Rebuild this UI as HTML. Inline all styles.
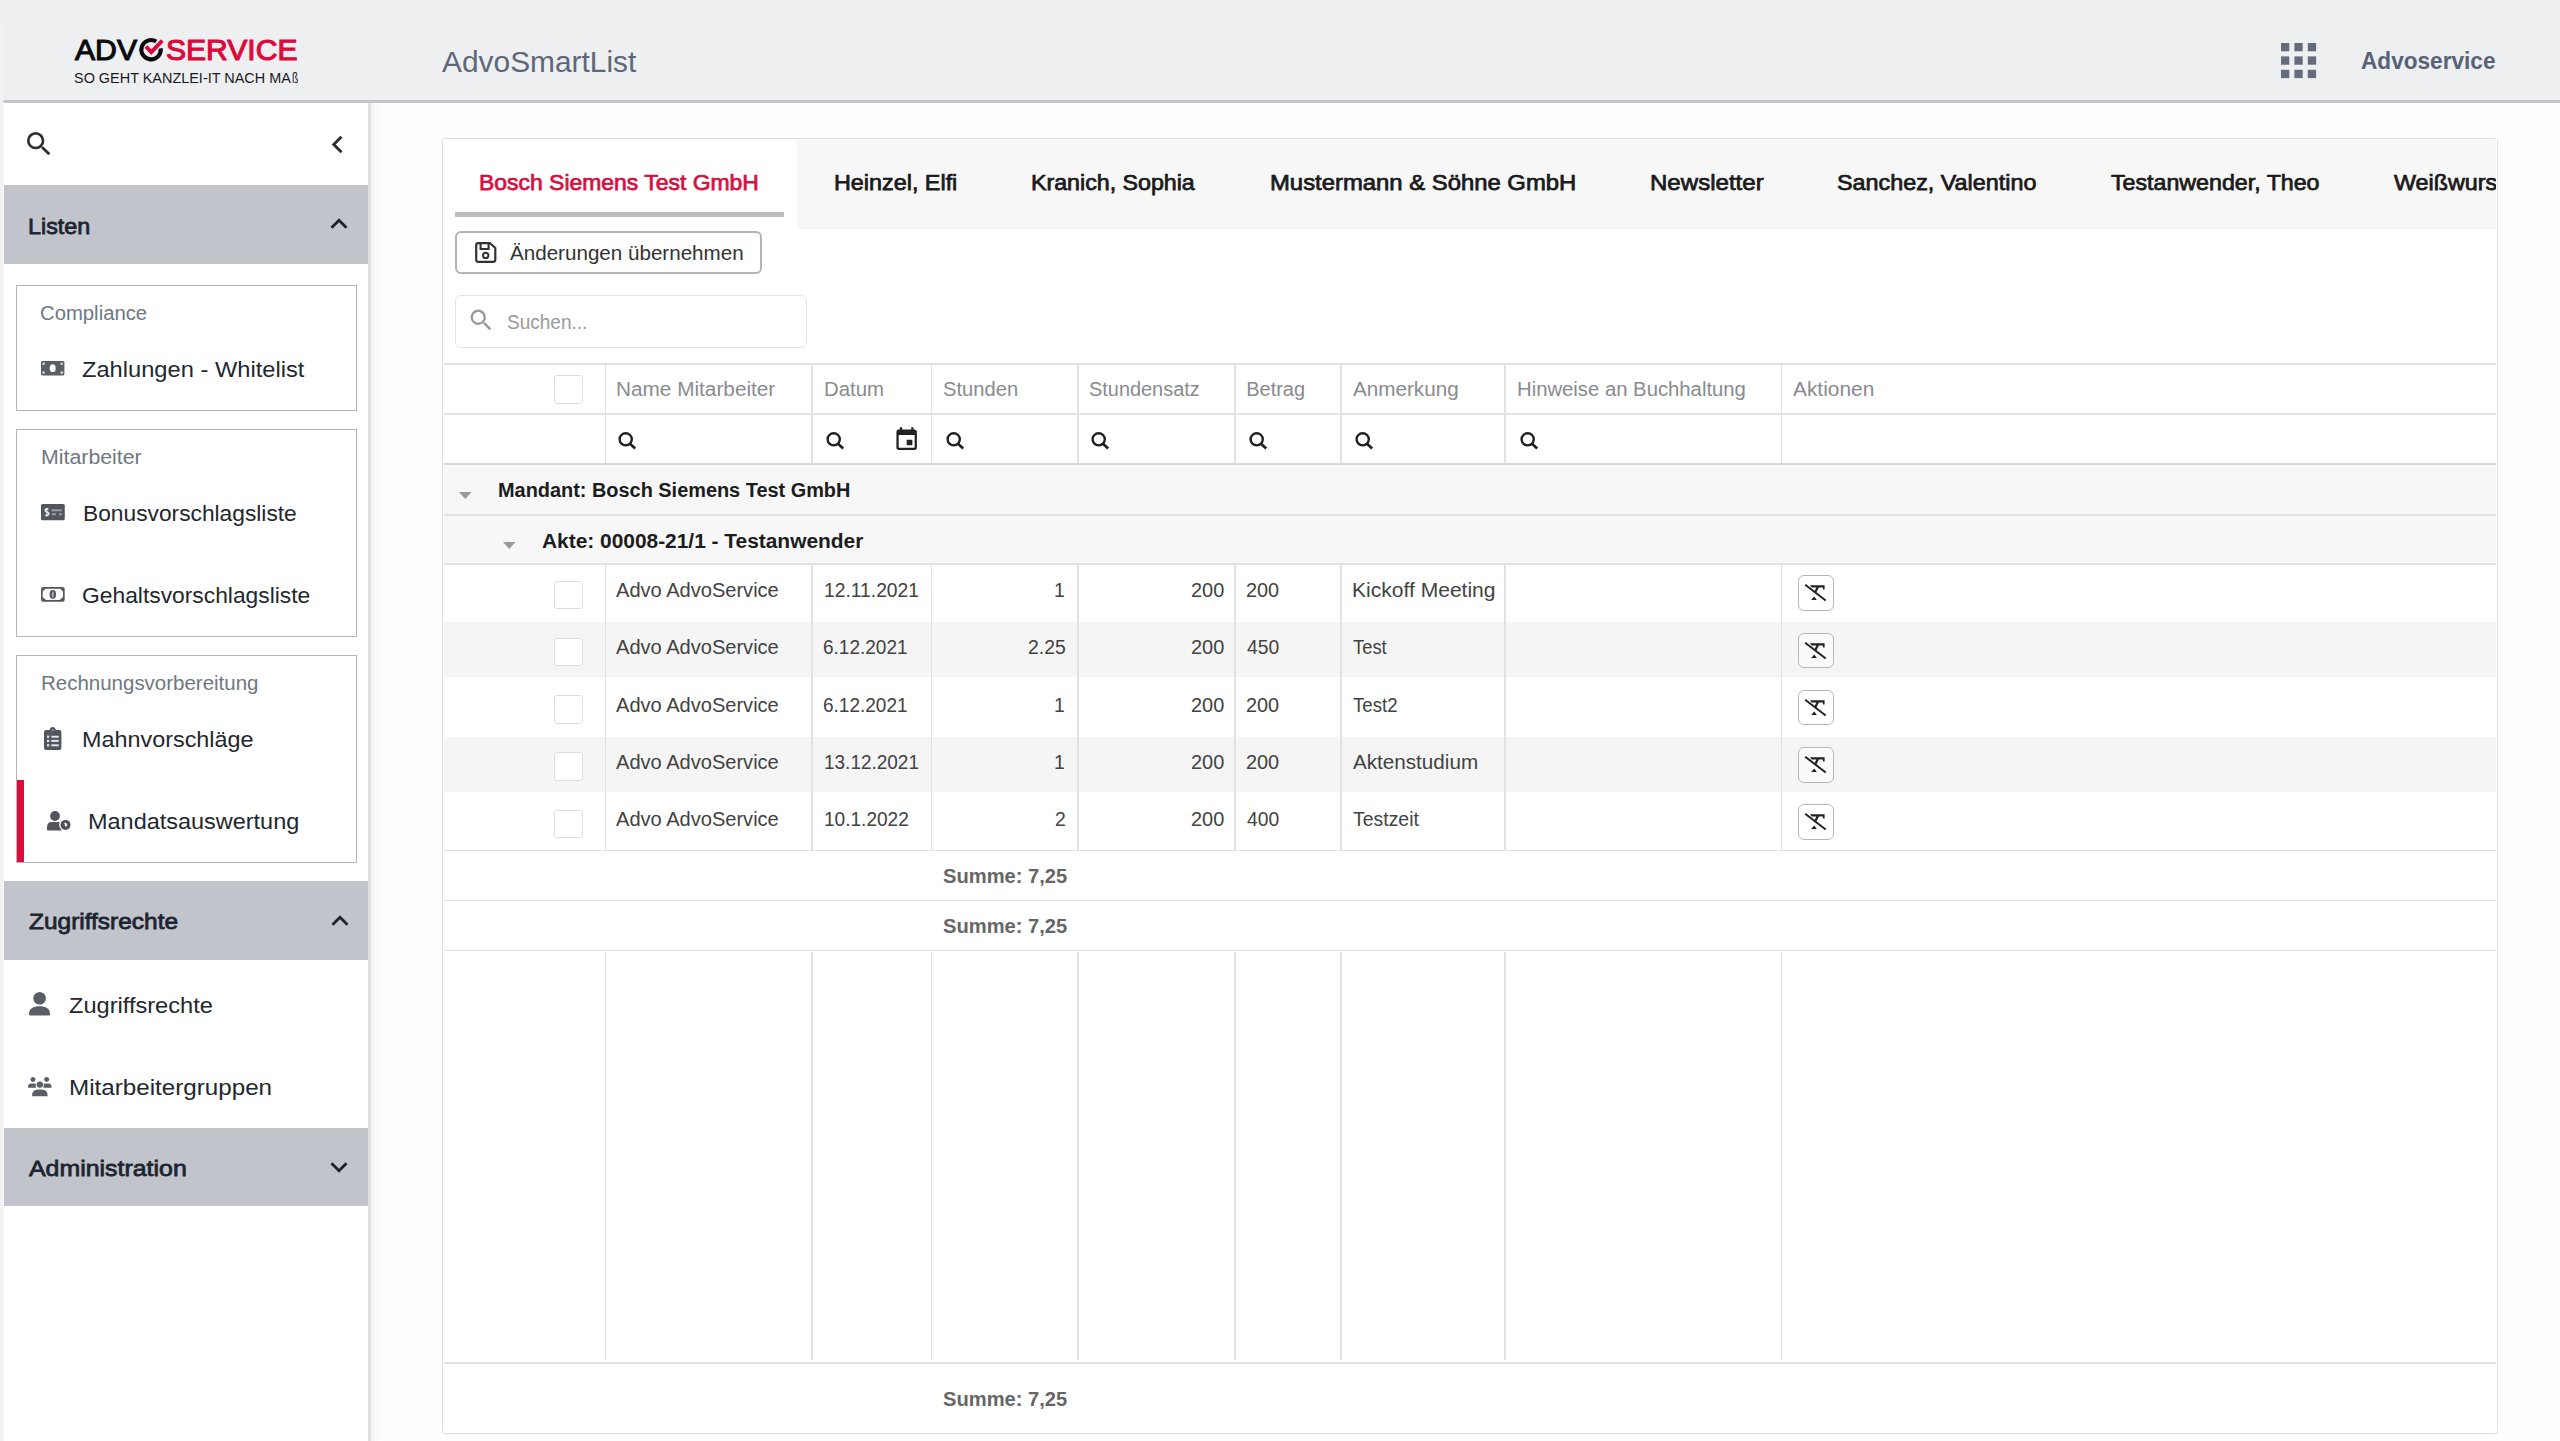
<!DOCTYPE html>
<html lang="de"><head><meta charset="utf-8"><title>AdvoSmartList</title>
<style>
html,body{margin:0;padding:0;overflow:hidden;}
body{width:2560px;height:1441px;overflow:hidden;position:relative;background:#fefefe;font-family:"Liberation Sans", sans-serif;}
.t{position:absolute;white-space:nowrap;line-height:1;transform-origin:0 0;font-family:"Liberation Sans", sans-serif;}
.b{position:absolute;box-sizing:border-box;}
svg{position:absolute;overflow:visible;}
</style></head><body>
<div class="b" style="left:4px;top:102px;width:364px;height:1339px;background:#ffffff;"></div>
<div class="b" style="left:368.2px;top:102.8px;width:12px;height:1338.2px;background:linear-gradient(to right,#e0e0e3 0,#e0e0e3 19%,#f5f5f6 26%,#fdfdfd 100%);"></div>
<div class="b" style="left:0px;top:0px;width:2560px;height:100px;background:#eeeff1;"></div>
<div class="b" style="left:0px;top:100px;width:2560px;height:2.8px;background:#c3c4c7;"></div>
<div class="b" style="left:0px;top:24px;width:4.2px;height:1417px;background:linear-gradient(to right,#f3f3f4 0,#f2f2f3 70%,rgba(242,242,243,0) 100%);"></div>
<div class="b" style="left:4px;top:185px;width:364px;height:79px;background:#c1c4cb;"></div>
<div class="b" style="left:4px;top:881px;width:364px;height:79px;background:#c1c4cb;"></div>
<div class="b" style="left:4px;top:1127.5px;width:364px;height:78.5px;background:#c1c4cb;"></div>
<div class="b" style="left:16px;top:285px;width:341px;height:126px;background:#fff;border:1.7px solid #b3b5b9;"></div>
<div class="b" style="left:16px;top:429px;width:341px;height:208px;background:#fff;border:1.7px solid #b3b5b9;"></div>
<div class="b" style="left:16px;top:655px;width:341px;height:208px;background:#fff;border:1.7px solid #b3b5b9;"></div>
<div class="b" style="left:17px;top:780px;width:6.5px;height:82px;background:#de0b3d;"></div>
<div class="b" style="left:442px;top:138px;width:2055.5px;height:1296px;background:#ffffff;border:1.8px solid #dedede;border-radius:2.5px;"></div>
<div class="b" style="left:444px;top:140px;width:2052px;height:89px;background:#f7f7f7;"></div>
<div class="b" style="left:444px;top:140px;width:353px;height:90px;background:#ffffff;"></div>
<div class="b" style="left:455px;top:211.5px;width:329px;height:5.5px;background:#bcbec2;"></div>
<div class="b" style="left:455px;top:231px;width:307px;height:43px;background:#fff;border:2px solid #b3b3b3;border-radius:6px;"></div>
<div class="b" style="left:455px;top:295px;width:352px;height:53px;background:#fff;border:1.7px solid #e2e2e2;border-radius:6px;"></div>
<div class="b" style="left:444px;top:465px;width:2052px;height:49px;background:#f7f7f7;"></div>
<div class="b" style="left:444px;top:516px;width:2052px;height:48px;background:#f7f7f7;"></div>
<div class="b" style="left:444px;top:622.2px;width:2052px;height:55px;background:#f5f5f5;"></div>
<div class="b" style="left:444px;top:736.9px;width:2052px;height:55px;background:#f5f5f5;"></div>
<div class="b" style="left:444px;top:363px;width:2052px;height:1.6px;background:#e2e2e2;"></div>
<div class="b" style="left:444px;top:413px;width:2052px;height:1.5px;background:#e2e2e2;"></div>
<div class="b" style="left:444px;top:463px;width:2052px;height:2.2px;background:#d9d9d9;"></div>
<div class="b" style="left:444px;top:514px;width:2052px;height:1.6px;background:#e2e2e2;"></div>
<div class="b" style="left:444px;top:563.4px;width:2052px;height:1.5px;background:#e2e2e2;"></div>
<div class="b" style="left:444px;top:849.7px;width:2052px;height:1.5px;background:#e2e2e2;"></div>
<div class="b" style="left:444px;top:899.6px;width:2052px;height:1.5px;background:#e2e2e2;"></div>
<div class="b" style="left:444px;top:949.6px;width:2052px;height:1.5px;background:#e2e2e2;"></div>
<div class="b" style="left:444px;top:1361.5px;width:2052px;height:2px;background:#e2e2e2;"></div>
<div class="b" style="left:604.5px;top:365px;width:1.5px;height:98px;background:#e2e2e2;"></div>
<div class="b" style="left:604.5px;top:565px;width:1.5px;height:285.5px;background:#e2e2e2;"></div>
<div class="b" style="left:604.5px;top:951.5px;width:1.5px;height:408px;background:#e2e2e2;"></div>
<div class="b" style="left:811.25px;top:365px;width:1.5px;height:98px;background:#e2e2e2;"></div>
<div class="b" style="left:811.25px;top:565px;width:1.5px;height:285.5px;background:#e2e2e2;"></div>
<div class="b" style="left:811.25px;top:951.5px;width:1.5px;height:408px;background:#e2e2e2;"></div>
<div class="b" style="left:930.5px;top:365px;width:1.5px;height:98px;background:#e2e2e2;"></div>
<div class="b" style="left:930.5px;top:565px;width:1.5px;height:285.5px;background:#e2e2e2;"></div>
<div class="b" style="left:930.5px;top:951.5px;width:1.5px;height:408px;background:#e2e2e2;"></div>
<div class="b" style="left:1077.25px;top:365px;width:1.5px;height:98px;background:#e2e2e2;"></div>
<div class="b" style="left:1077.25px;top:565px;width:1.5px;height:285.5px;background:#e2e2e2;"></div>
<div class="b" style="left:1077.25px;top:951.5px;width:1.5px;height:408px;background:#e2e2e2;"></div>
<div class="b" style="left:1234.25px;top:365px;width:1.5px;height:98px;background:#e2e2e2;"></div>
<div class="b" style="left:1234.25px;top:565px;width:1.5px;height:285.5px;background:#e2e2e2;"></div>
<div class="b" style="left:1234.25px;top:951.5px;width:1.5px;height:408px;background:#e2e2e2;"></div>
<div class="b" style="left:1340.25px;top:365px;width:1.5px;height:98px;background:#e2e2e2;"></div>
<div class="b" style="left:1340.25px;top:565px;width:1.5px;height:285.5px;background:#e2e2e2;"></div>
<div class="b" style="left:1340.25px;top:951.5px;width:1.5px;height:408px;background:#e2e2e2;"></div>
<div class="b" style="left:1504.25px;top:365px;width:1.5px;height:98px;background:#e2e2e2;"></div>
<div class="b" style="left:1504.25px;top:565px;width:1.5px;height:285.5px;background:#e2e2e2;"></div>
<div class="b" style="left:1504.25px;top:951.5px;width:1.5px;height:408px;background:#e2e2e2;"></div>
<div class="b" style="left:1780.5px;top:365px;width:1.5px;height:98px;background:#e2e2e2;"></div>
<div class="b" style="left:1780.5px;top:565px;width:1.5px;height:285.5px;background:#e2e2e2;"></div>
<div class="b" style="left:1780.5px;top:951.5px;width:1.5px;height:408px;background:#e2e2e2;"></div>
<div class="b" style="left:554px;top:375px;width:29px;height:28.5px;background:#fff;border:1.5px solid #dedede;border-radius:3px;"></div>
<div class="b" style="left:553.5px;top:580.5px;width:29px;height:28.5px;background:#fff;border:1.5px solid #dedede;border-radius:3px;"></div>
<div class="b" style="left:1798.3px;top:575.4px;width:35.3px;height:35.3px;background:rgba(255,255,255,0.5);border:1.8px solid #b7b7b7;border-radius:6px;"></div>
<svg style="left:1798.3px;top:575.4px;" width="35.3" height="35.3" viewBox="0 0 35.3 35.3"><path d="M7.2 9.7 L27.7 25.5" stroke="#222" stroke-width="2" fill="none"/><path d="M12 10.3 H26.6 V14.4 H24.9 V12.4 H20.9 L17.9 18.6 L15.9 17.2 L18.4 12.4 H13.6 Z" fill="#222"/><path d="M13.1 25.1 L16.3 21.4 L18.8 25.1 Z" fill="#222"/></svg>
<div class="b" style="left:553.5px;top:637.75px;width:29px;height:28.5px;background:#fff;border:1.5px solid #dedede;border-radius:3px;"></div>
<div class="b" style="left:1798.3px;top:632.67px;width:35.3px;height:35.3px;background:rgba(255,255,255,0.5);border:1.8px solid #b7b7b7;border-radius:6px;"></div>
<svg style="left:1798.3px;top:632.67px;" width="35.3" height="35.3" viewBox="0 0 35.3 35.3"><path d="M7.2 9.7 L27.7 25.5" stroke="#222" stroke-width="2" fill="none"/><path d="M12 10.3 H26.6 V14.4 H24.9 V12.4 H20.9 L17.9 18.6 L15.9 17.2 L18.4 12.4 H13.6 Z" fill="#222"/><path d="M13.1 25.1 L16.3 21.4 L18.8 25.1 Z" fill="#222"/></svg>
<div class="b" style="left:553.5px;top:695.0px;width:29px;height:28.5px;background:#fff;border:1.5px solid #dedede;border-radius:3px;"></div>
<div class="b" style="left:1798.3px;top:689.9399999999999px;width:35.3px;height:35.3px;background:rgba(255,255,255,0.5);border:1.8px solid #b7b7b7;border-radius:6px;"></div>
<svg style="left:1798.3px;top:689.9399999999999px;" width="35.3" height="35.3" viewBox="0 0 35.3 35.3"><path d="M7.2 9.7 L27.7 25.5" stroke="#222" stroke-width="2" fill="none"/><path d="M12 10.3 H26.6 V14.4 H24.9 V12.4 H20.9 L17.9 18.6 L15.9 17.2 L18.4 12.4 H13.6 Z" fill="#222"/><path d="M13.1 25.1 L16.3 21.4 L18.8 25.1 Z" fill="#222"/></svg>
<div class="b" style="left:553.5px;top:752.25px;width:29px;height:28.5px;background:#fff;border:1.5px solid #dedede;border-radius:3px;"></div>
<div class="b" style="left:1798.3px;top:747.21px;width:35.3px;height:35.3px;background:rgba(255,255,255,0.5);border:1.8px solid #b7b7b7;border-radius:6px;"></div>
<svg style="left:1798.3px;top:747.21px;" width="35.3" height="35.3" viewBox="0 0 35.3 35.3"><path d="M7.2 9.7 L27.7 25.5" stroke="#222" stroke-width="2" fill="none"/><path d="M12 10.3 H26.6 V14.4 H24.9 V12.4 H20.9 L17.9 18.6 L15.9 17.2 L18.4 12.4 H13.6 Z" fill="#222"/><path d="M13.1 25.1 L16.3 21.4 L18.8 25.1 Z" fill="#222"/></svg>
<div class="b" style="left:553.5px;top:809.5px;width:29px;height:28.5px;background:#fff;border:1.5px solid #dedede;border-radius:3px;"></div>
<div class="b" style="left:1798.3px;top:804.48px;width:35.3px;height:35.3px;background:rgba(255,255,255,0.5);border:1.8px solid #b7b7b7;border-radius:6px;"></div>
<svg style="left:1798.3px;top:804.48px;" width="35.3" height="35.3" viewBox="0 0 35.3 35.3"><path d="M7.2 9.7 L27.7 25.5" stroke="#222" stroke-width="2" fill="none"/><path d="M12 10.3 H26.6 V14.4 H24.9 V12.4 H20.9 L17.9 18.6 L15.9 17.2 L18.4 12.4 H13.6 Z" fill="#222"/><path d="M13.1 25.1 L16.3 21.4 L18.8 25.1 Z" fill="#222"/></svg>
<svg style="left:459px;top:491.5px;" width="12.5" height="7" viewBox="0 0 12.5 7"><path d="M0 0H12.5L6.25 7Z" fill="#9a9a9a"/></svg>
<svg style="left:503px;top:541.5px;" width="12.5" height="7" viewBox="0 0 12.5 7"><path d="M0 0H12.5L6.25 7Z" fill="#9a9a9a"/></svg>
<svg style="left:23.40343053173242px;top:128.30343053173243px;" width="31.972555746140657" height="31.972555746140657" viewBox="0 0 24 24"><path d="M15.5 14h-.79l-.28-.27A6.471 6.471 0 0 0 16 9.5 6.5 6.5 0 1 0 9.5 16c1.61 0 3.09-.59 4.23-1.57l.27.28v.79l5 4.99L20.49 19l-4.99-5zm-6 0C7.01 14 5 11.99 5 9.5S7.01 5 9.5 5 14 7.01 14 9.5 11.99 14 9.5 14z" fill="#2b2f36"/></svg>
<svg style="left:320.3px;top:126.8px;" width="35" height="35" viewBox="0 0 24 24"><path d="M15.41 7.41L14 6l-6 6 6 6 1.41-1.41L10.83 12z" fill="#2b2f36"/></svg>
<svg style="left:322px;top:207px;" width="34" height="34" viewBox="0 0 24 24"><path d="M12 8l-6 6 1.41 1.41L12 10.83l4.59 4.58L18 14z" fill="#1e2430"/></svg>
<svg style="left:322.5px;top:904.4px;" width="34" height="34" viewBox="0 0 24 24"><path d="M12 8l-6 6 1.41 1.41L12 10.83l4.59 4.58L18 14z" fill="#1e2430"/></svg>
<svg style="left:322px;top:1149.8px;" width="34" height="34" viewBox="0 0 24 24"><path d="M16.59 8.59L12 13.17 7.41 8.59 6 10l6 6 6-6z" fill="#1e2430"/></svg>
<svg style="left:467.4493996569468px;top:306.4493996569468px;" width="28.404802744425385" height="28.404802744425385" viewBox="0 0 24 24"><path d="M15.5 14h-.79l-.28-.27A6.471 6.471 0 0 0 16 9.5 6.5 6.5 0 1 0 9.5 16c1.61 0 3.09-.59 4.23-1.57l.27.28v.79l5 4.99L20.49 19l-4.99-5zm-6 0C7.01 14 5 11.99 5 9.5S7.01 5 9.5 5 14 7.01 14 9.5 11.99 14 9.5 14z" fill="#9a9a9a"/></svg>
<svg style="left:618.1px;top:432.3px;" width="18.2" height="17.4" viewBox="0 0 18.2 17.4"><circle cx="7.7" cy="7.3" r="6.1" fill="none" stroke="#1f1f1f" stroke-width="2.4"/><path d="M12 11.7 L17.2 16.5" stroke="#1f1f1f" stroke-width="2.7" fill="none"/></svg>
<svg style="left:826.2px;top:432.3px;" width="18.2" height="17.4" viewBox="0 0 18.2 17.4"><circle cx="7.7" cy="7.3" r="6.1" fill="none" stroke="#1f1f1f" stroke-width="2.4"/><path d="M12 11.7 L17.2 16.5" stroke="#1f1f1f" stroke-width="2.7" fill="none"/></svg>
<svg style="left:945.8px;top:432.3px;" width="18.2" height="17.4" viewBox="0 0 18.2 17.4"><circle cx="7.7" cy="7.3" r="6.1" fill="none" stroke="#1f1f1f" stroke-width="2.4"/><path d="M12 11.7 L17.2 16.5" stroke="#1f1f1f" stroke-width="2.7" fill="none"/></svg>
<svg style="left:1091px;top:432.3px;" width="18.2" height="17.4" viewBox="0 0 18.2 17.4"><circle cx="7.7" cy="7.3" r="6.1" fill="none" stroke="#1f1f1f" stroke-width="2.4"/><path d="M12 11.7 L17.2 16.5" stroke="#1f1f1f" stroke-width="2.7" fill="none"/></svg>
<svg style="left:1248.8px;top:432.3px;" width="18.2" height="17.4" viewBox="0 0 18.2 17.4"><circle cx="7.7" cy="7.3" r="6.1" fill="none" stroke="#1f1f1f" stroke-width="2.4"/><path d="M12 11.7 L17.2 16.5" stroke="#1f1f1f" stroke-width="2.7" fill="none"/></svg>
<svg style="left:1355.1px;top:432.3px;" width="18.2" height="17.4" viewBox="0 0 18.2 17.4"><circle cx="7.7" cy="7.3" r="6.1" fill="none" stroke="#1f1f1f" stroke-width="2.4"/><path d="M12 11.7 L17.2 16.5" stroke="#1f1f1f" stroke-width="2.7" fill="none"/></svg>
<svg style="left:1519.6px;top:432.3px;" width="18.2" height="17.4" viewBox="0 0 18.2 17.4"><circle cx="7.7" cy="7.3" r="6.1" fill="none" stroke="#1f1f1f" stroke-width="2.4"/><path d="M12 11.7 L17.2 16.5" stroke="#1f1f1f" stroke-width="2.7" fill="none"/></svg>
<svg style="left:892.583px;top:426.361px;" width="27.336" height="27.336" viewBox="0 0 24 24"><path d="M17 12h-5v5h5v-5zM16 1v2H8V1H6v2H5c-1.11 0-1.99.9-1.99 2L3 19c0 1.1.89 2 2 2h14c1.1 0 2-.9 2-2V5c0-1.1-.9-2-2-2h-1V1h-2zm3 18H5V8h14v11z" fill="#222"/></svg>
<svg style="left:2281px;top:42.5px;" width="36" height="36" viewBox="0 0 36 36"><rect x="0.0" y="0.0" width="8.3" height="8.3" fill="#646c7b"/><rect x="13.4" y="0.0" width="8.3" height="8.3" fill="#646c7b"/><rect x="26.8" y="0.0" width="8.3" height="8.3" fill="#646c7b"/><rect x="0.0" y="13.4" width="8.3" height="8.3" fill="#646c7b"/><rect x="13.4" y="13.4" width="8.3" height="8.3" fill="#646c7b"/><rect x="26.8" y="13.4" width="8.3" height="8.3" fill="#646c7b"/><rect x="0.0" y="26.8" width="8.3" height="8.3" fill="#646c7b"/><rect x="13.4" y="26.8" width="8.3" height="8.3" fill="#646c7b"/><rect x="26.8" y="26.8" width="8.3" height="8.3" fill="#646c7b"/></svg>
<svg style="left:475px;top:242px;" width="21.5" height="21" viewBox="0 0 21.5 21"><path d="M1.2 3.2 Q1.2 1.2 3.2 1.2 H15.2 L20.3 6 V17.8 Q20.3 19.8 18.3 19.8 H3.2 Q1.2 19.8 1.2 17.8 Z" fill="none" stroke="#333" stroke-width="2.2" stroke-linejoin="round"/><path d="M5.6 1.6 V7 H13.6 V1.6" fill="none" stroke="#333" stroke-width="2.1"/><circle cx="10.7" cy="13.4" r="2.7" fill="none" stroke="#333" stroke-width="2"/></svg>
<svg style="left:135px;top:33px;" width="32" height="32" viewBox="0 0 32 32"><path d="M 21.19 8.47 A 9.7 9.7 0 1 0 25.66 15.35" fill="none" stroke="#0b0b0d" stroke-width="4.1"/><path d="M10.9 13.5 L16.3 19.2 L27.3 7.7" fill="none" stroke="#dc0a3c" stroke-width="3.9" stroke-linejoin="miter"/></svg>
<svg style="left:41.3px;top:361.2px;" width="23.4" height="14.4" viewBox="0 0 23.4 14.4"><rect x="0" y="0" width="23.4" height="14.4" rx="1.5" fill="#595e67"/><ellipse cx="11.7" cy="7.2" rx="3" ry="3.9" fill="#fff"/><circle cx="2.6" cy="2.8" r="1.3" fill="#d9dadc"/><circle cx="20.8" cy="2.8" r="1.3" fill="#d9dadc"/><circle cx="2.6" cy="11.6" r="1.3" fill="#d9dadc"/><circle cx="20.8" cy="11.6" r="1.3" fill="#d9dadc"/></svg>
<svg style="left:40.9px;top:504px;" width="23.8" height="16.3" viewBox="0 0 23.8 16.3"><rect x="0" y="0" width="23.8" height="16.3" rx="1.6" fill="#51555d"/><rect x="10.4" y="5.3" width="10.5" height="2" fill="#9a9da5"/><rect x="10.9" y="9.3" width="3.9" height="1.9" fill="#a4a7ae"/><rect x="18" y="9.3" width="2.9" height="1.9" fill="#a4a7ae"/><path d="M7.5 5.4 Q5.7 4.2 4.5 5.4 Q3.7 6.8 5.9 7.9 Q8.3 8.9 7.4 10.6 Q6 11.9 4.2 10.9" stroke="#e6e7ea" stroke-width="1.7" fill="none"/><path d="M5.9 3.8 V12.4" stroke="#e6e7ea" stroke-width="0.9"/></svg>
<svg style="left:41px;top:587.1px;" width="23.7" height="14.7" viewBox="0 0 23.7 14.7"><rect x="0.85" y="0.85" width="22" height="13" rx="1.2" fill="none" stroke="#53565d" stroke-width="1.7"/><path d="M1.6 1.6 H5 L1.6 4.6 Z M22.1 1.6 H18.7 L22.1 4.6 Z M1.6 13.1 H5 L1.6 10.1 Z M22.1 13.1 H18.7 L22.1 10.1 Z" fill="#53565d"/><ellipse cx="11.8" cy="7.4" rx="3.3" ry="4.4" fill="#595c65"/><ellipse cx="11.8" cy="7.4" rx="0.9" ry="3" fill="#b3b5bd"/></svg>
<svg style="left:44.05px;top:726.55px;" width="17.4" height="23.1" viewBox="0 0 17.4 23.1"><path d="M2 3.1 H5.6 Q6.2 0 8.7 0 Q11.2 0 11.8 3.1 H15.4 Q17.4 3.1 17.4 5.1 V21.1 Q17.4 23.1 15.4 23.1 H2 Q0 23.1 0 21.1 V5.1 Q0 3.1 2 3.1 Z" fill="#51555d"/><circle cx="8.7" cy="3.3" r="1" fill="#9fa2a9"/><rect x="7.3" y="8.75" width="7.5" height="1.9" fill="#e8e9ec"/><rect x="3" y="8.60" width="2.2" height="2.2" fill="#e8e9ec"/><rect x="7.3" y="12.95" width="7.5" height="1.9" fill="#e8e9ec"/><rect x="3" y="12.80" width="2.2" height="2.2" fill="#e8e9ec"/><rect x="7.3" y="17.35" width="7.5" height="1.9" fill="#e8e9ec"/><rect x="3" y="17.20" width="2.2" height="2.2" fill="#e8e9ec"/></svg>
<svg style="left:47px;top:810.5px;" width="24" height="20" viewBox="0 0 24 20"><circle cx="8" cy="5" r="4.9" fill="#52555c"/><path d="M0 18.2 V16.4 Q0 11 5 11 H11 Q13.4 11 14.6 12 V19.6 H1.4 Q0 19.6 0 18.2 Z" fill="#52555c"/><circle cx="18.5" cy="13.9" r="6.3" fill="#fff"/><circle cx="18.5" cy="13.9" r="5" fill="#4f5258"/><path d="M17.2 11.6 L19.6 12.2 L20.4 15 L18.2 15.6 Z" fill="#f4f4f5"/></svg>
<svg style="left:29px;top:992.25px;" width="21" height="23.4" viewBox="0 0 21 23.4"><circle cx="10.6" cy="6.3" r="6.3" fill="#595e67"/><path d="M0 22.4 V21.4 C0 16.4 4.6 14.2 10.5 14.2 C16.4 14.2 21 16.4 21 21.4 V22.4 Q21 23.4 20 23.4 H1 Q0 23.4 0 22.4 Z" fill="#595e67"/></svg>
<svg style="left:27.75px;top:1076.9px;" width="23.5" height="19.2" viewBox="0 0 23.5 19.2"><circle cx="11.85" cy="7.6" r="3.2" fill="#595e67"/><circle cx="5" cy="2.6" r="2.5" fill="#595e67"/><circle cx="18.7" cy="2.6" r="2.5" fill="#595e67"/><path d="M4.2 19.2 V17.6 C4.2 13.6 7.6 12.4 11.85 12.4 C16.1 12.4 19.5 13.6 19.5 17.6 V19.2 Z" fill="#595e67"/><path d="M0 10.8 V9.6 Q0 6.4 3.2 6.4 H6.4 Q7.4 6.4 8 6.9 Q7.4 8.8 8.2 10.8 Z" fill="#595e67"/><path d="M23.5 10.8 V9.6 Q23.5 6.4 20.3 6.4 H17.1 Q16.1 6.4 15.5 6.9 Q16.1 8.8 15.3 10.8 Z" fill="#595e67"/></svg>
<span class="t" style="left:442.00px;top:48.00px;font-size:29px;font-weight:400;color:#5d6778;transform:scaleX(1.0307);">AdvoSmartList</span>
<span class="t" style="left:2361.30px;top:50.00px;font-size:23px;font-weight:700;color:#586277;transform:scaleX(0.9830);">Advoservice</span>
<span class="t" style="left:74.78px;top:34.00px;font-size:30.4px;font-weight:400;color:#0b0b0d;transform:scaleX(0.9926);-webkit-text-stroke:1.15px currentColor;">ADV</span>
<span class="t" style="left:166.49px;top:34.00px;font-size:30.4px;font-weight:400;color:#dc0a3c;transform:scaleX(0.9897);-webkit-text-stroke:1.15px currentColor;">SERVICE</span>
<span class="t" style="left:73.70px;top:71.00px;font-size:14.6px;font-weight:400;color:#1a1a1e;transform:scaleX(0.9891);">SO GEHT KANZLEI-IT NACH MA</span>
<span class="t" style="left:292.40px;top:72.00px;font-size:13.8px;font-weight:400;color:#1a1a1e;transform:scaleX(0.7400);">ß</span>
<span class="t" style="left:27.78px;top:215.00px;font-size:22.8px;font-weight:400;color:#1e2430;transform:scaleX(1.0244);-webkit-text-stroke:0.8px currentColor;">Listen</span>
<span class="t" style="left:40.49px;top:303.00px;font-size:20px;font-weight:400;color:#6f7780;transform:scaleX(1.0145);">Compliance</span>
<span class="t" style="left:82.00px;top:358.00px;font-size:22.8px;font-weight:400;color:#23272e;transform:scaleX(1.0382);">Zahlungen - Whitelist</span>
<span class="t" style="left:40.83px;top:447.00px;font-size:20px;font-weight:400;color:#6f7780;transform:scaleX(1.0660);">Mitarbeiter</span>
<span class="t" style="left:82.50px;top:502.00px;font-size:22.8px;font-weight:400;color:#23272e;transform:scaleX(0.9983);">Bonusvorschlagsliste</span>
<span class="t" style="left:81.80px;top:584.00px;font-size:22.8px;font-weight:400;color:#23272e;transform:scaleX(1.0009);">Gehaltsvorschlagsliste</span>
<span class="t" style="left:40.68px;top:673.00px;font-size:20px;font-weight:400;color:#6f7780;transform:scaleX(1.0241);">Rechnungsvorbereitung</span>
<span class="t" style="left:81.97px;top:728.00px;font-size:22.8px;font-weight:400;color:#23272e;transform:scaleX(1.0254);">Mahnvorschläge</span>
<span class="t" style="left:88.17px;top:810.00px;font-size:22.8px;font-weight:400;color:#23272e;transform:scaleX(1.0289);">Mandatsauswertung</span>
<span class="t" style="left:28.60px;top:910.00px;font-size:22.8px;font-weight:400;color:#1e2430;transform:scaleX(1.0725);-webkit-text-stroke:0.8px currentColor;">Zugriffsrechte</span>
<span class="t" style="left:69.40px;top:994.00px;font-size:22.8px;font-weight:400;color:#23272e;transform:scaleX(1.0349);">Zugriffsrechte</span>
<span class="t" style="left:68.94px;top:1076.00px;font-size:22.8px;font-weight:400;color:#23272e;transform:scaleX(1.0611);">Mitarbeitergruppen</span>
<span class="t" style="left:28.60px;top:1157.00px;font-size:22.8px;font-weight:400;color:#1e2430;transform:scaleX(1.0921);-webkit-text-stroke:0.8px currentColor;">Administration</span>
<span class="t" style="left:479.10px;top:172.00px;font-size:22.4px;font-weight:400;color:#d6103f;transform:scaleX(1.0240);-webkit-text-stroke:0.75px currentColor;">Bosch Siemens Test GmbH</span>
<span class="t" style="left:833.73px;top:172.00px;font-size:22.4px;font-weight:400;color:#1a1a1a;transform:scaleX(1.0431);-webkit-text-stroke:0.75px currentColor;">Heinzel, Elfi</span>
<span class="t" style="left:1030.54px;top:172.00px;font-size:22.4px;font-weight:400;color:#1a1a1a;transform:scaleX(1.0357);-webkit-text-stroke:0.75px currentColor;">Kranich, Sophia</span>
<span class="t" style="left:1269.61px;top:172.00px;font-size:22.4px;font-weight:400;color:#1a1a1a;transform:scaleX(1.0654);-webkit-text-stroke:0.75px currentColor;">Mustermann &amp; Söhne GmbH</span>
<span class="t" style="left:1649.80px;top:172.00px;font-size:22.4px;font-weight:400;color:#1a1a1a;transform:scaleX(1.0745);-webkit-text-stroke:0.75px currentColor;">Newsletter</span>
<span class="t" style="left:1837.33px;top:172.00px;font-size:22.4px;font-weight:400;color:#1a1a1a;transform:scaleX(1.0423);-webkit-text-stroke:0.75px currentColor;">Sanchez, Valentino</span>
<span class="t" style="left:2111.38px;top:172.00px;font-size:22.4px;font-weight:400;color:#1a1a1a;transform:scaleX(1.0361);-webkit-text-stroke:0.75px currentColor;">Testanwender, Theo</span>
<div class="b" style="left:2380px;top:150px;width:115.5px;height:70px;overflow:hidden"><span class="t" style="left:14.38px;top:22.00px;font-size:22.4px;font-weight:400;color:#1a1a1a;transform:scaleX(1.0400);-webkit-text-stroke:0.75px currentColor;">Weißwurst, Hans</span></div>
<span class="t" style="left:510.00px;top:243.00px;font-size:20px;font-weight:400;color:#333;transform:scaleX(1.0300);">Änderungen übernehmen</span>
<span class="t" style="left:506.80px;top:312.00px;font-size:20px;font-weight:400;color:#9a9a9a;transform:scaleX(0.9512);">Suchen...</span>
<span class="t" style="left:615.86px;top:379.00px;font-size:20px;font-weight:400;color:#898b8e;transform:scaleX(1.0385);">Name Mitarbeiter</span>
<span class="t" style="left:823.78px;top:379.00px;font-size:20px;font-weight:400;color:#898b8e;transform:scaleX(1.0202);">Datum</span>
<span class="t" style="left:943.00px;top:379.00px;font-size:20px;font-weight:400;color:#898b8e;transform:scaleX(1.0083);">Stunden</span>
<span class="t" style="left:1088.70px;top:379.00px;font-size:20px;font-weight:400;color:#898b8e;transform:scaleX(0.9955);">Stundensatz</span>
<span class="t" style="left:1246.20px;top:379.00px;font-size:20px;font-weight:400;color:#898b8e;transform:scaleX(1.0000);">Betrag</span>
<span class="t" style="left:1353.30px;top:379.00px;font-size:20px;font-weight:400;color:#898b8e;transform:scaleX(1.0331);">Anmerkung</span>
<span class="t" style="left:1516.99px;top:379.00px;font-size:20px;font-weight:400;color:#898b8e;transform:scaleX(1.0140);">Hinweise an Buchhaltung</span>
<span class="t" style="left:1793.40px;top:379.00px;font-size:20px;font-weight:400;color:#898b8e;transform:scaleX(1.0442);">Aktionen</span>
<span class="t" style="left:497.75px;top:480.00px;font-size:20px;font-weight:700;color:#1c1c1c;transform:scaleX(0.9951);">Mandant: Bosch Siemens Test GmbH</span>
<span class="t" style="left:541.90px;top:531.00px;font-size:20px;font-weight:700;color:#1c1c1c;transform:scaleX(1.0447);">Akte: 00008-21/1 - Testanwender</span>
<span class="t" style="left:616.25px;top:580.00px;font-size:20px;font-weight:400;color:#424242;transform:scaleX(1.0028);">Advo AdvoService</span>
<span class="t" style="left:824.04px;top:580.00px;font-size:20px;font-weight:400;color:#424242;transform:scaleX(0.9632);">12.11.2021</span>
<span class="t" style="left:1053.53px;top:580.00px;font-size:20px;font-weight:400;color:#424242;transform:scaleX(0.9700);">1</span>
<span class="t" style="left:1190.60px;top:580.00px;font-size:20px;font-weight:400;color:#424242;transform:scaleX(0.9970);">200</span>
<span class="t" style="left:1246.01px;top:580.00px;font-size:20px;font-weight:400;color:#424242;transform:scaleX(0.9924);">200</span>
<span class="t" style="left:1352.05px;top:580.00px;font-size:20px;font-weight:400;color:#424242;transform:scaleX(1.0526);">Kickoff Meeting</span>
<span class="t" style="left:616.25px;top:637.00px;font-size:20px;font-weight:400;color:#424242;transform:scaleX(1.0028);">Advo AdvoService</span>
<span class="t" style="left:823.45px;top:637.00px;font-size:20px;font-weight:400;color:#424242;transform:scaleX(0.9505);">6.12.2021</span>
<span class="t" style="left:1028.43px;top:637.00px;font-size:20px;font-weight:400;color:#424242;transform:scaleX(0.9682);">2.25</span>
<span class="t" style="left:1190.60px;top:637.00px;font-size:20px;font-weight:400;color:#424242;transform:scaleX(0.9970);">200</span>
<span class="t" style="left:1247.00px;top:637.00px;font-size:20px;font-weight:400;color:#424242;transform:scaleX(0.9625);">450</span>
<span class="t" style="left:1353.10px;top:637.00px;font-size:20px;font-weight:400;color:#424242;transform:scaleX(0.9186);">Test</span>
<span class="t" style="left:616.25px;top:695.00px;font-size:20px;font-weight:400;color:#424242;transform:scaleX(1.0028);">Advo AdvoService</span>
<span class="t" style="left:823.45px;top:695.00px;font-size:20px;font-weight:400;color:#424242;transform:scaleX(0.9505);">6.12.2021</span>
<span class="t" style="left:1053.53px;top:695.00px;font-size:20px;font-weight:400;color:#424242;transform:scaleX(0.9700);">1</span>
<span class="t" style="left:1190.60px;top:695.00px;font-size:20px;font-weight:400;color:#424242;transform:scaleX(0.9970);">200</span>
<span class="t" style="left:1246.01px;top:695.00px;font-size:20px;font-weight:400;color:#424242;transform:scaleX(0.9924);">200</span>
<span class="t" style="left:1353.10px;top:695.00px;font-size:20px;font-weight:400;color:#424242;transform:scaleX(0.9312);">Test2</span>
<span class="t" style="left:616.25px;top:752.00px;font-size:20px;font-weight:400;color:#424242;transform:scaleX(1.0028);">Advo AdvoService</span>
<span class="t" style="left:824.05px;top:752.00px;font-size:20px;font-weight:400;color:#424242;transform:scaleX(0.9487);">13.12.2021</span>
<span class="t" style="left:1053.53px;top:752.00px;font-size:20px;font-weight:400;color:#424242;transform:scaleX(0.9700);">1</span>
<span class="t" style="left:1190.60px;top:752.00px;font-size:20px;font-weight:400;color:#424242;transform:scaleX(0.9970);">200</span>
<span class="t" style="left:1246.01px;top:752.00px;font-size:20px;font-weight:400;color:#424242;transform:scaleX(0.9924);">200</span>
<span class="t" style="left:1353.10px;top:752.00px;font-size:20px;font-weight:400;color:#424242;transform:scaleX(1.0323);">Aktenstudium</span>
<span class="t" style="left:616.25px;top:809.00px;font-size:20px;font-weight:400;color:#424242;transform:scaleX(1.0028);">Advo AdvoService</span>
<span class="t" style="left:824.05px;top:809.00px;font-size:20px;font-weight:400;color:#424242;transform:scaleX(0.9533);">10.1.2022</span>
<span class="t" style="left:1055.33px;top:809.00px;font-size:20px;font-weight:400;color:#424242;transform:scaleX(0.9700);">2</span>
<span class="t" style="left:1190.60px;top:809.00px;font-size:20px;font-weight:400;color:#424242;transform:scaleX(0.9970);">200</span>
<span class="t" style="left:1247.00px;top:809.00px;font-size:20px;font-weight:400;color:#424242;transform:scaleX(0.9625);">400</span>
<span class="t" style="left:1353.10px;top:809.00px;font-size:20px;font-weight:400;color:#424242;transform:scaleX(0.9715);">Testzeit</span>
<span class="t" style="left:942.50px;top:866.00px;font-size:20px;font-weight:700;color:#666;transform:scaleX(1.0068);">Summe: 7,25</span>
<span class="t" style="left:942.50px;top:916.00px;font-size:20px;font-weight:700;color:#666;transform:scaleX(1.0068);">Summe: 7,25</span>
<span class="t" style="left:942.50px;top:1389.00px;font-size:20px;font-weight:700;color:#666;transform:scaleX(1.0068);">Summe: 7,25</span>
</body></html>
